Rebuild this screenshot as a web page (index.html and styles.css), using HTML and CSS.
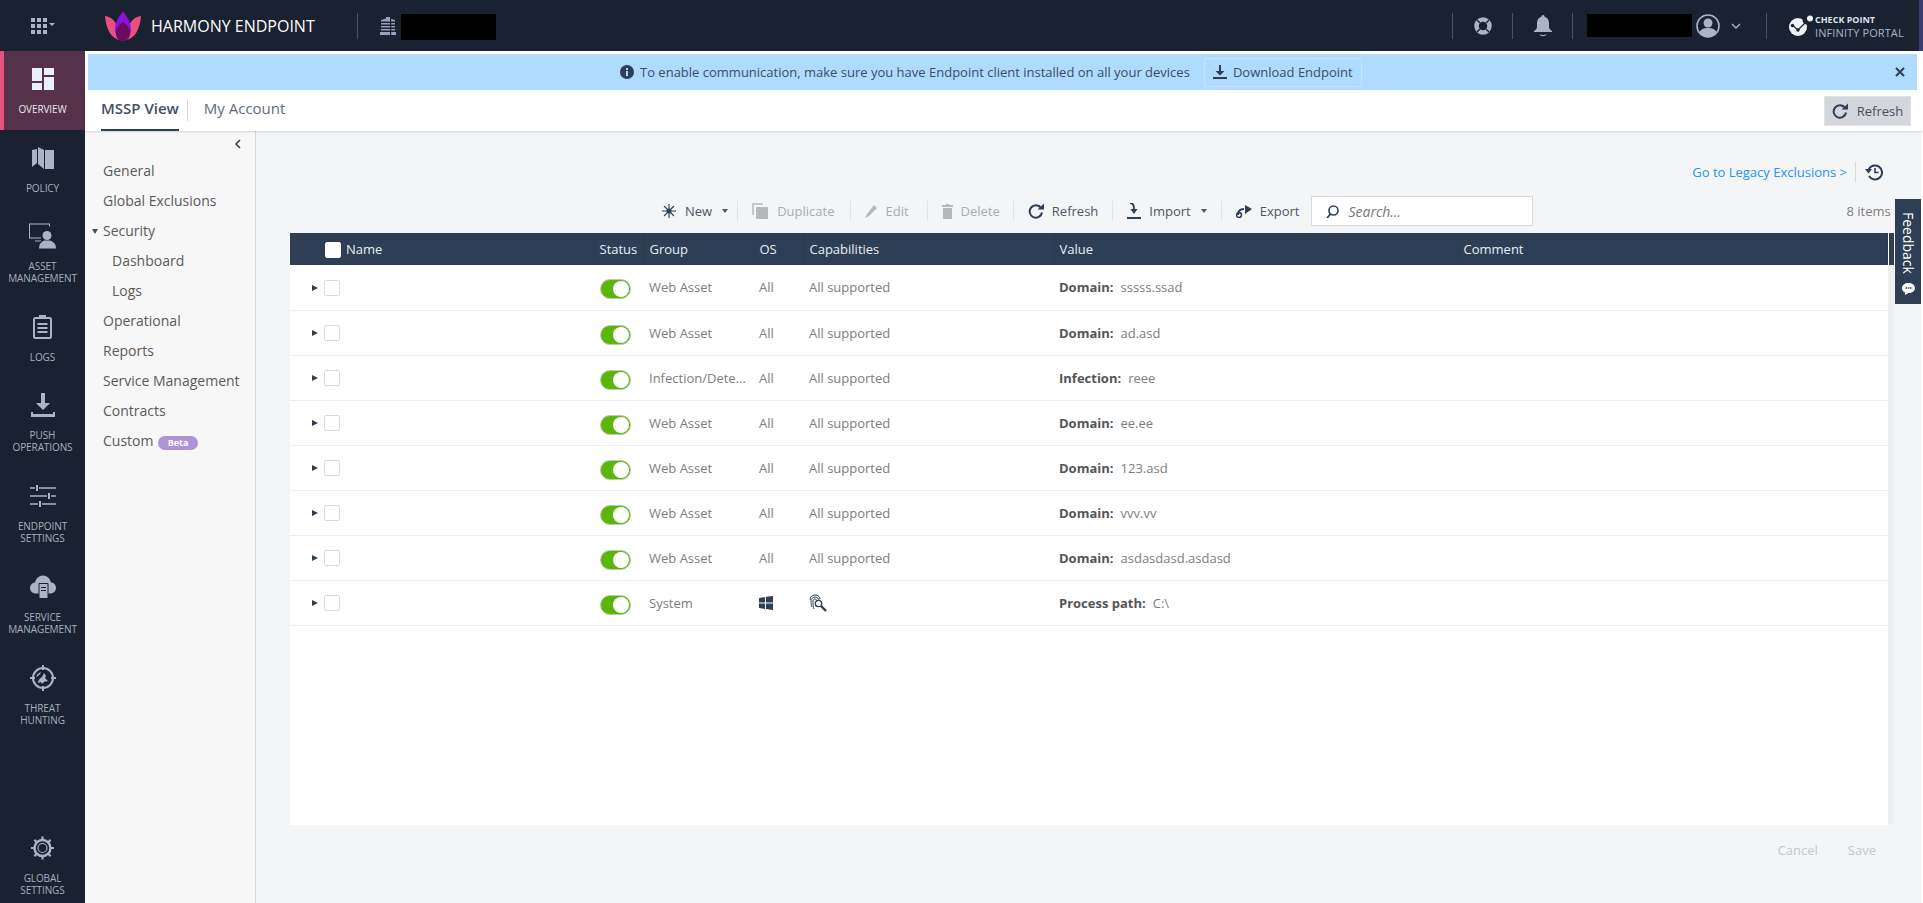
FILE: index.html
```html
<!DOCTYPE html>
<html lang="en">
<head>
  <meta charset="UTF-8">
  <title>Harmony Endpoint</title>
  <link rel="stylesheet" href="styles.css">
</head>
<body>

  <!-- Top bar -->
  <header class="topbar">
    <div class="apps">
      <svg width="24" height="16" viewBox="0 0 24 16" fill="#a9b4c6"><path d="M0 0h4v4H0zM6 0h4v4H6zM12 0h4v4h-4zM0 6h4v4H0zM6 6h4v4H6zM12 6h4v4h-4zM0 12h4v4H0zM6 12h4v4H6zM12 12h4v4h-4zM18 5h6l-3 3z"/></svg>
    </div>
    <svg class="logo" width="36" height="30" viewBox="0 0 36 30">
      <path d="M0 5C7 6 12 11 13 20c.4 3 1 6 2 9C7 28 1 19 0 5z" fill="#e8517f"/>
      <path d="M36 5c-7 1-12 6-13 15-.4 3-1 6-2 9 8-1 14-10 15-24z" fill="#e8517f"/>
      <path d="M18 0c3 5 8 10 8 18 0 7-4 12-8 12s-8-5-8-12c0-8 5-13 8-18z" fill="#8a10e0"/>
      <path d="M18 11c4 2 7 7 7 11 0 5-3 8-7 8s-7-3-7-8c0-4 3-9 7-11z" fill="#6c0a5c"/>
    </svg>
    <div class="product">HARMONY ENDPOINT</div>
    <div class="bar-sep sep-tenant"></div>
    <svg class="building" width="16" height="18" viewBox="0 0 16 18" fill="#93a2b8"><path d="M6 0h4v1.500l5 1.500v1.500H1V3l5-1.500zM1 6h14v1.500H1zM1 9h14v1.500H1zM1 12h14v1.500H1zM0 15h16v3H0z"/><path d="M10 1h1.200v17H10z" fill="#1a2130"/></svg>
    <div class="redact redact-tenant"></div>

    <div class="bar-right">
      <div class="bar-sep"></div>
      <div class="bar-icon">
        <svg width="18" height="18" viewBox="0 0 18 18"><circle cx="9" cy="9" r="6.500" fill="none" stroke="#a9b4c6" stroke-width="4.500"/><path d="M3 3l3 3M15 3l-3 3M3 15l3-3M15 15l-3-3" stroke="#1a2130" stroke-width="1.400"/></svg>
      </div>
      <div class="bar-sep"></div>
      <div class="bar-icon">
        <svg width="18" height="22" viewBox="0 0 18 22" fill="#a9b4c6"><path d="M9 0c1 0 1.600.8 1.600 1.700C13.500 2.500 15 5 15 8v4c0 1.500 1 2.500 3 4v1H0v-1c2-1.500 3-2.500 3-4V8c0-3 1.500-5.500 4.400-6.300C7.400.8 8 0 9 0z"/><path d="M6 19.500c1 1.500 5 1.500 6 0" fill="none" stroke="#a9b4c6" stroke-width="1.200"/></svg>
      </div>
      <div class="bar-sep"></div>
      <div class="redact redact-user"></div>
      <svg class="avatar" width="24" height="24" viewBox="0 0 24 24"><circle cx="12" cy="12" r="11" fill="#1a2130" stroke="#a9b4c6" stroke-width="1.600"/><circle cx="12" cy="9" r="4.500" fill="#a9b4c6"/><path d="M3.500 18c2-3.500 5-4 8.500-4s6.500.5 8.500 4c-2 3-5 5-8.500 5s-6.500-2-8.500-5z" fill="#a9b4c6"/></svg>
      <svg class="user-chev" width="10" height="6" viewBox="0 0 10 6"><path d="M1 1l4 4 4-4" fill="none" stroke="#a9b4c6" stroke-width="1.400"/></svg>
      <div class="bar-sep"></div>
      <div class="portal">
        <svg width="26" height="22" viewBox="0 0 26 22"><circle cx="10" cy="12" r="9" fill="#eef1f5"/><circle cx="19" cy="5" r="4.500" fill="#1a2130"/><circle cx="22" cy="3.500" r="3" fill="#eef1f5"/><path d="M4 10l6 5 8-8" fill="none" stroke="#1a2130" stroke-width="1.200"/><circle cx="4.500" cy="10.500" r="1.700" fill="#1a2130"/><circle cx="10" cy="15" r="1.700" fill="#1a2130"/></svg>
        <div class="portal-text">
          <div class="portal-top">CHECK POINT</div>
          <div class="portal-bottom">INFINITY PORTAL</div>
        </div>
      </div>
    </div>
  </header>

  <div class="layout">

    <!-- Left navigation -->
    <nav class="sidebar">
      <div class="nav-item active">
        <svg width="22" height="22" viewBox="0 0 22 22" fill="#e8f0fb"><path d="M0 0h10v13H0zM12 0h10v7H12zM0 15h10v7H0zM12 9h10v13H12z"/></svg>
        <span>OVERVIEW</span>
      </div>
      <div class="nav-item">
        <svg width="22" height="22" viewBox="0 0 22 22" fill="#a9b4c6"><path d="M0 3l5-1v14l-5 4zM6 0l6 3v19l-6-5zM13 3h9v19h-9z"/></svg>
        <span>POLICY</span>
      </div>
      <div class="nav-item">
        <svg width="27" height="25" viewBox="0 0 27 25" fill="#a9b4c6"><path d="M0 0h21v3h-1V1H1v13h11v1H0zM6 17h6v1H6z"/><circle cx="18" cy="12" r="4.500"/><path d="M10 25c0-5 3-7 5-8h6c3 1 6 3 6 8z"/></svg>
        <span>ASSET<br>MANAGEMENT</span>
      </div>
      <div class="nav-item">
        <svg width="19" height="24" viewBox="0 0 19 24"><rect x="1" y="3" width="17" height="20" rx="1.500" fill="none" stroke="#a9b4c6" stroke-width="2"/><path d="M6 0h7v4H6z" fill="#a9b4c6"/><path d="M4.500 9h10M4.500 13h10M4.500 17h10" stroke="#a9b4c6" stroke-width="1.800"/></svg>
        <span>LOGS</span>
      </div>
      <div class="nav-item">
        <svg width="24" height="24" viewBox="0 0 24 24" fill="#a9b4c6"><path d="M10 0h4v10h5l-7 7-7-7h5zM0 19h2v2h20v-2h2v5H0z"/></svg>
        <span>PUSH<br>OPERATIONS</span>
      </div>
      <div class="nav-item">
        <svg width="26" height="24" viewBox="0 0 26 24" fill="#a9b4c6"><path d="M0 3.200h5v1.600H0zM9 3.200h17v1.600H9zM6 1h2v6H6zM0 11.200h17v1.600H0zM21 11.200h5v1.600h-5zM18 9h2v6h-2zM0 19.200h8v1.600H0zM12 19.200h14v1.600H12zM9 17h2v6H9z"/></svg>
        <span>ENDPOINT<br>SETTINGS</span>
      </div>
      <div class="nav-item">
        <svg width="26" height="23" viewBox="0 0 26 23"><path d="M6 18c-3.500 0-6-2.500-6-5.500S2.500 7 5 7c1-4 4-7 8-7s7 3 8 7c3 0 5 2.500 5 5.500S23.500 18 20 18z" fill="#a9b4c6"/><path d="M9 8h9v15H9z" fill="#a9b4c6" stroke="#1a2130"/><path d="M11 12h5M11 15h5" stroke="#1a2130"/></svg>
        <span>SERVICE<br>MANAGEMENT</span>
      </div>
      <div class="nav-item">
        <svg width="26" height="26" viewBox="0 0 26 26"><circle cx="13" cy="13" r="10" fill="none" stroke="#a9b4c6" stroke-width="2"/><path d="M13 0v5M13 21v5M0 13h5M21 13h5" stroke="#a9b4c6" stroke-width="2"/><path d="M8 18c0-3 2-5 4-6l2-4 2 3-1 2 3 3-4 1-2 2-1-2z" fill="#a9b4c6"/><path d="M6 12c1-3 3-4 5-5-1 3-3 4-5 5z" fill="#a9b4c6"/></svg>
        <span>THREAT<br>HUNTING</span>
      </div>
      <div class="nav-item nav-bottom">
        <svg width="23" height="23" viewBox="0 0 23 23"><circle cx="11.500" cy="11.500" r="8" fill="none" stroke="#a9b4c6" stroke-width="2.500"/><circle cx="11.500" cy="11.500" r="4.500" fill="none" stroke="#a9b4c6" stroke-width="1.200"/><path d="M11.500 0v4M11.500 19v4M0 11.500h4M19 11.500h4M3.400 3.400l2.800 2.800M16.800 16.800l2.800 2.800M3.400 19.600l2.800-2.800M16.800 6.200l2.800-2.800" stroke="#a9b4c6" stroke-width="2.200"/></svg>
        <span>GLOBAL<br>SETTINGS</span>
      </div>
    </nav>

    <div class="page">

      <!-- Info banner -->
      <div class="banner">
        <svg class="info" width="14" height="14" viewBox="0 0 14 14"><circle cx="7" cy="7" r="7" fill="#2d3e55"/><path d="M6 6h2v5H6zM6 3h2v2H6z" fill="#aedbff"/></svg>
        <span class="banner-text">To enable communication, make sure you have Endpoint client installed on all your devices</span>
        <div class="banner-btn">
          <svg width="14" height="14" viewBox="0 0 14 14" fill="#2d3e55"><path d="M6 0h2v6h3.500L7 10.500 2.500 6H6zM0 12h14v2H0z"/></svg>
          Download Endpoint
        </div>
        <svg class="banner-close" width="10" height="10" viewBox="0 0 10 10"><path d="M1 1l8 8M9 1L1 9" stroke="#2d3e55" stroke-width="2"/></svg>
      </div>

      <!-- Tabs -->
      <div class="tabs">
        <div class="tab current">MSSP View</div>
        <div class="tab-sep"></div>
        <div class="tab">My Account</div>
        <div class="top-refresh">
          <svg width="16" height="16" viewBox="0 0 16 16"><path d="M13 5a6.200 6.200 0 1 0 1 4.500" fill="none" stroke="#2d3e55" stroke-width="2"/><path d="M9.500 6.500H16V.5z" fill="#2d3e55"/></svg>
          Refresh
        </div>
      </div>

      <div class="work">

        <!-- Sub navigation -->
        <aside class="subnav">
          <svg class="collapse" width="7" height="10" viewBox="0 0 7 10"><path d="M6 1L2 5l4 4" fill="none" stroke="#2d3e55" stroke-width="1.600"/></svg>
          <a>General</a>
          <a>Global Exclusions</a>
          <a class="open">Security</a>
          <a class="child">Dashboard</a>
          <a class="child">Logs</a>
          <a>Operational</a>
          <a>Reports</a>
          <a>Service Management</a>
          <a>Contracts</a>
          <a>Custom <span class="beta">Beta</span></a>
        </aside>

        <main class="content">
          <div class="legacy">
            <a>Go to Legacy Exclusions &gt;</a>
            <svg width="18" height="18" viewBox="0 0 18 18"><path d="M3.500 7a7 7 0 1 1 .5 6" fill="none" stroke="#2d3e55" stroke-width="2"/><path d="M0 6h7L3.500 10.500z" fill="#2d3e55"/><path d="M10 5v4.500h3.500" fill="none" stroke="#2d3e55" stroke-width="1.600"/></svg>
          </div>

          <div class="toolbar">
            <div class="tool tool-new">
              <svg width="16" height="16" viewBox="0 0 16 16"><path d="M8 1v14M1 8h14M3 3l10 10M13 3L3 13" stroke="#2d3e55" stroke-width="1.100"/><circle cx="8" cy="8" r="2.500" fill="#2d3e55"/></svg>
              New <i class="caret"></i>
            </div>
            <div class="tool off tool-dup">
              <svg width="17" height="17" viewBox="0 0 17 17"><path d="M1 12V1h10" fill="none" stroke="#b5b8bd" stroke-width="1.500"/><path d="M4 4h12v12H4z" fill="#b5b8bd"/></svg>
              Duplicate
            </div>
            <div class="tool off tool-edit">
              <svg width="12" height="13" viewBox="0 0 12 13" fill="#b5b8bd"><path d="M9 0l3 3-8 8-4 2 2-4z"/></svg>
              Edit
            </div>
            <div class="tool off tool-del">
              <svg width="11" height="15" viewBox="0 0 11 15" fill="#b5b8bd"><path d="M4 0h3v1h4v2H0V1h4zM1 4h9v11H1z"/></svg>
              Delete
            </div>
            <div class="tool">
              <svg width="16" height="16" viewBox="0 0 16 16"><path d="M13 5a6.200 6.200 0 1 0 1 4.500" fill="none" stroke="#2d3e55" stroke-width="2"/><path d="M9.500 6.500H16V.5z" fill="#2d3e55"/></svg>
              Refresh
            </div>
            <div class="tool">
              <svg width="14" height="16" viewBox="0 0 14 16"><path d="M3 0c3 0 4 2 4 6" fill="none" stroke="#2d3e55" stroke-width="1.800"/><path d="M3.500 6h7L7 11zM0 14h14v2H0z" fill="#2d3e55"/></svg>
              Import <i class="caret"></i>
            </div>
            <div class="tool last">
              <svg width="16" height="13" viewBox="0 0 16 13"><path d="M8 4C4 4 2 6 2 10" fill="none" stroke="#2d3e55" stroke-width="2"/><path d="M9 0l7 4-7 5z" fill="#2d3e55"/><circle cx="3" cy="10" r="2.500" fill="none" stroke="#2d3e55" stroke-width="1.500"/></svg>
              Export
            </div>
            <div class="search">
              <svg width="13" height="13" viewBox="0 0 13 13"><circle cx="7.500" cy="5.500" r="4.500" fill="none" stroke="#2d3e55" stroke-width="1.600"/><path d="M4.500 9L1 13" stroke="#2d3e55" stroke-width="1.800"/></svg>
              <em>Search...</em>
            </div>
            <div class="count">8 items</div>
          </div>

          <div class="table-wrap">
            <div class="table-box">
              <table class="grid">
                <colgroup>
                  <col class="c-name"><col class="c-status"><col class="c-group"><col class="c-os"><col class="c-cap"><col class="c-value"><col>
                </colgroup>
                <thead>
                  <tr>
                    <th><span class="check head-check"></span>Name</th>
                    <th>Status</th><th>Group</th><th>OS</th><th>Capabilities</th><th>Value</th><th>Comment</th>
                  </tr>
                </thead>
                <tbody>
                  <tr><td><i class="arrow"></i><span class="check"></span></td><td><span class="toggle"></span></td><td>Web Asset</td><td>All</td><td>All supported</td><td><b>Domain:</b>sssss.ssad</td><td></td></tr>
                  <tr><td><i class="arrow"></i><span class="check"></span></td><td><span class="toggle"></span></td><td>Web Asset</td><td>All</td><td>All supported</td><td><b>Domain:</b>ad.asd</td><td></td></tr>
                  <tr><td><i class="arrow"></i><span class="check"></span></td><td><span class="toggle"></span></td><td>Infection/Dete...</td><td>All</td><td>All supported</td><td><b>Infection:</b>reee</td><td></td></tr>
                  <tr><td><i class="arrow"></i><span class="check"></span></td><td><span class="toggle"></span></td><td>Web Asset</td><td>All</td><td>All supported</td><td><b>Domain:</b>ee.ee</td><td></td></tr>
                  <tr><td><i class="arrow"></i><span class="check"></span></td><td><span class="toggle"></span></td><td>Web Asset</td><td>All</td><td>All supported</td><td><b>Domain:</b>123.asd</td><td></td></tr>
                  <tr><td><i class="arrow"></i><span class="check"></span></td><td><span class="toggle"></span></td><td>Web Asset</td><td>All</td><td>All supported</td><td><b>Domain:</b>vvv.vv</td><td></td></tr>
                  <tr><td><i class="arrow"></i><span class="check"></span></td><td><span class="toggle"></span></td><td>Web Asset</td><td>All</td><td>All supported</td><td><b>Domain:</b>asdasdasd.asdasd</td><td></td></tr>
                  <tr>
                    <td><i class="arrow"></i><span class="check"></span></td><td><span class="toggle"></span></td><td>System</td>
                    <td><svg width="14" height="14" viewBox="0 0 14 14" fill="#2d3e55"><path d="M0 2l6-1v5.500H0zM7 .8L14 0v6.500H7zM0 7.500h6V13l-6-1zM7 7.500h7V14l-7-1z"/></svg></td>
                    <td><svg width="18" height="18" viewBox="0 0 18 18" fill="none" stroke="#2d3e55"><path d="M1 6c0-3 2-5 5-5s5 2 5 4M3 13c-1-2-1-4-1-6s2-4 4-4 4 2 4 3M5 15c-1-2-1-5-1-8 0-1 1-2 2-2s2 1 2 2"/><circle cx="9.500" cy="9.500" r="3.200" stroke-width="1.300"/><path d="M12 12l5 5" stroke-width="2.400"/></svg></td>
                    <td><b>Process path:</b>C:\</td><td></td>
                  </tr>
                </tbody>
              </table>
            </div>
            <div class="scroll-strip"></div>
          </div>

          <div class="actions">
            <span>Cancel</span>
            <span>Save</span>
          </div>

          <!-- Feedback tab -->
          <div class="feedback">
            <span>Feedback</span>
            <svg width="13" height="12" viewBox="0 0 13 12"><path d="M6.500 0C10 0 13 2 13 5s-3 5-6.500 5L3 12v-2.500C1 8.500 0 7 0 5c0-3 3-5 6.500-5z" fill="#fff"/><path d="M3.500 4.200h1.500v1.500H3.500zM5.800 4.200h1.500v1.500H5.800zM8 4.200h1.500v1.500H8z" fill="#2d3e55"/></svg>
          </div>
        </main>
      </div>
    </div>
  </div>

</body>
</html>
```

FILE: styles.css
```css
* {
  box-sizing: border-box;
}

body {
  margin: 0;
  height: 100vh;
  overflow: hidden;
  display: flex;
  flex-direction: column;
  background-color: #ffffff;
  color: #5a5a5a;
  font-family: "Open Sans", sans-serif;
  font-size: 13px;
}

/* Top bar */
.topbar {
  height: 51px;
  flex: none;
  display: flex;
  align-items: center;
  background-color: #1a2130;
  border-right: 4px solid #3a3f70;
}

.apps {
  width: 105px;
  padding: 0 0 0 31px;
  display: flex;
  align-items: center;
}

.logo {
  margin-right: 10px;
}

.product {
  width: 206px;
  color: #ffffff;
  font-size: 16px;
  white-space: nowrap;
}

.bar-sep {
  width: 1px;
  height: 26px;
  background-color: #47505f;
}

.building {
  margin: 0 5px 0 22px;
}

.redact {
  background-color: #000000;
}

.redact-tenant {
  width: 95px;
  height: 26px;
  margin-top: 2px;
}

.bar-right {
  margin-left: auto;
  display: flex;
  align-items: center;
}

.bar-icon {
  width: 59px;
  display: flex;
  justify-content: center;
}

.redact-user {
  width: 105px;
  height: 23px;
  margin: -1px 4px 0 14px;
}

.avatar {
  margin-right: 11px;
}

.user-chev {
  margin-right: 25px;
}

.portal {
  width: 152px;
  padding-left: 21px;
  display: flex;
  align-items: center;
  gap: 1px;
}

.portal-text {
  white-space: nowrap;
  line-height: 13px;
}

.portal-top {
  color: #dfe3ea;
  font-size: 9px;
  font-weight: 700;
}

.portal-bottom {
  color: #a9b4c6;
  font-size: 11px;
  letter-spacing: 0.1px;
}

/* Page frame */
.layout {
  flex: 1;
  min-height: 0;
  display: flex;
}

.sidebar {
  width: 85px;
  flex: none;
  display: flex;
  flex-direction: column;
  background-color: #1a2130;
}

.nav-item {
  height: 78px;
  padding-top: 15px;
  display: flex;
  flex-direction: column;
  align-items: center;
  color: #a7afbb;
  font-size: 10px;
  line-height: 12px;
  letter-spacing: -0.1px;
  text-align: center;
}

.nav-item svg {
  height: 26px;
  flex: none;
  margin-bottom: 11px;
}

.nav-item:has(br) {
  height: 91px;
}

.nav-item.active {
  height: 79px;
  background-color: #553249;
  border-left: 4px solid #e8517f;
  padding-right: 4px;
  color: #e6e8ee;
}

.nav-bottom {
  margin-top: auto;
  height: 65px !important;
  padding-top: 0;
  margin-bottom: 3px;
}

.page {
  flex: 1;
  min-width: 0;
  display: flex;
  flex-direction: column;
}

/* Banner */
.banner {
  height: 36px;
  flex: none;
  margin: 3px 6px 0 3px;
  padding-left: 532px;
  display: flex;
  align-items: center;
  background-color: #aedbff;
  color: #3d4d63;
}

.banner-text {
  margin-left: 6px;
}

.banner-btn {
  height: 29px;
  width: 158px;
  margin-left: 14px;
  display: flex;
  align-items: center;
  justify-content: center;
  gap: 6px;
  border: 1px solid #c7e3f9;
}

.banner-close {
  margin-left: auto;
  margin-right: 12px;
}

/* Tabs */
.tabs {
  height: 41px;
  flex: none;
  padding: 0 12px 0 16px;
  display: flex;
  align-items: center;
  position: relative;
  z-index: 1;
  background-color: #ffffff;
  box-shadow: 0 1px 2px rgba(0, 0, 0, 0.15);
  font-size: 15px;
}

.tab {
  height: 41px;
  line-height: 37px;
  color: #5e6b80;
}

.tab.current {
  color: #3f4f66;
  font-weight: 600;
  border-bottom: 2px solid #2d3e55;
}

.tab-sep {
  width: 1px;
  height: 21px;
  margin: 0 16px 0 8px;
  background-color: #d8d8d8;
}

.top-refresh {
  margin-left: auto;
  width: 87px;
  height: 30px;
  display: flex;
  align-items: center;
  justify-content: center;
  gap: 9px;
  background-color: #d3d6db;
  border: 1px solid #e0e2e5;
  color: #4b4f57;
  font-size: 13px;
}

.work {
  flex: 1;
  min-height: 0;
  display: flex;
}

/* Sub navigation */
.subnav {
  width: 171px;
  flex: none;
  position: relative;
  padding-top: 25px;
  display: flex;
  flex-direction: column;
  background-color: #f7f7f7;
  border-right: 1px solid #d6d6d6;
  font-size: 14px;
}

.subnav a {
  height: 30px;
  line-height: 30px;
  padding-left: 18px;
  white-space: nowrap;
  color: #5a5a5a;
}

.subnav a.child {
  padding-left: 27px;
}

.subnav a.open {
  position: relative;
}

.subnav a.open::before {
  content: "";
  position: absolute;
  left: 7px;
  top: 13px;
  border-style: solid;
  border-width: 5px 3px 0;
  border-color: #3f4f66 transparent transparent;
}

.collapse {
  position: absolute;
  top: 8px;
  right: 14px;
}

.beta {
  display: inline-block;
  width: 40px;
  height: 14px;
  margin-left: 1px;
  border-radius: 7px;
  background-color: #ae94d6;
  color: #ffffff;
  font-size: 9px;
  font-weight: 700;
  line-height: 14px;
  text-align: center;
  vertical-align: 0;
}

/* Main area */
.content {
  flex: 1;
  min-width: 0;
  position: relative;
  padding: 31px 0 0 34px;
  display: flex;
  flex-direction: column;
  background-color: #f4f5f7;
  border-right: 2px solid #ffffff;
}

.legacy {
  height: 20px;
  padding-right: 38px;
  display: flex;
  align-items: center;
  justify-content: flex-end;
}

.legacy a {
  color: #2196f3;
  padding-right: 8px;
  border-right: 1px solid #d8d8d8;
  line-height: 20px;
  margin-right: 9px;
}

.toolbar {
  height: 30px;
  margin-top: 14px;
  padding-left: 357px;
  display: flex;
  align-items: center;
  color: #4f5661;
}

.tool {
  height: 20px;
  padding: 0 14px;
  display: flex;
  align-items: center;
  gap: 8px;
  white-space: nowrap;
  border-right: 1px solid #e1e3e6;
}

.tool.off {
  color: #a9acb1;
}

.tool.last {
  border-right: none;
  padding-right: 12px;
}

/* the real toolbar buttons are not evenly spaced */
.tool-new { padding-right: 9px; }
.tool-dup { padding-right: 16px; }
.tool-edit { padding-right: 18px; }
.tool-del { padding-right: 13px; }

.caret {
  margin-left: 2px;
  border-style: solid;
  border-width: 4px 3px 0;
  border-color: #4f5661 transparent transparent;
}

.search {
  width: 222px;
  height: 30px;
  padding-left: 14px;
  display: flex;
  align-items: center;
  gap: 9px;
  background-color: #ffffff;
  border: 1px solid #d6d8dc;
  color: #777777;
  font-size: 14px;
}

.count {
  margin-left: 313px;
  color: #7d7d7d;
  white-space: nowrap;
}

/* Table */
.table-wrap {
  height: 592px;
  margin-top: 7px;
  margin-right: 27px;
  display: flex;
}

.table-box {
  flex: 1;
  min-width: 0;
  background-color: #ffffff;
}

.scroll-strip {
  width: 6px;
  background-color: #eef0f2;
  border-radius: 0 0 3px 3px;
}

.scroll-strip::before {
  content: "";
  display: block;
  height: 32px;
  background-color: #2d3e55;
  border-left: 1px solid #ffffff;
}

.grid {
  width: 100%;
  table-layout: fixed;
  border-collapse: collapse;
}

.c-name { width: 304px; }
.c-status { width: 50px; }
.c-group { width: 110px; }
.c-os { width: 50px; }
.c-cap { width: 250px; }
.c-value { width: 404px; }

.grid th {
  height: 32px;
  padding: 0 5px;
  background-color: #2d3e55;
  border-right: 1px solid #2a3a4f;
  color: #e9eef5;
  font-weight: 400;
  text-align: left;
  white-space: nowrap;
}

.grid th:first-child {
  padding-left: 35px;
}

.grid td {
  height: 45px;
  padding: 0 5px;
  border-bottom: 1px solid #eeeeee;
  color: #7d7d7d;
  vertical-align: middle;
  white-space: nowrap;
}

.grid td:first-child {
  padding-left: 22px;
  padding-bottom: 1px;
}

.grid td svg {
  display: block;
}

.grid b {
  margin-right: 7px;
  color: #555555;
  font-weight: 700;
}

.arrow {
  display: inline-block;
  margin-right: 6px;
  border-style: solid;
  border-width: 3.5px 0 3.5px 6px;
  border-color: transparent transparent transparent #2d3e55;
  vertical-align: middle;
}

.check {
  display: inline-block;
  width: 16px;
  height: 16px;
  background-color: #ffffff;
  border: 1px solid #d9d9d9;
  border-radius: 2px;
  vertical-align: middle;
}

.head-check {
  margin-right: 5px;
  border-color: #ffffff;
}

.toggle {
  display: block;
  position: relative;
  width: 31px;
  height: 20px;
  margin: 4px 0 0 1px;
  background-color: #5cb60a;
  border: 1px solid #bccab0;
  border-radius: 10px;
}

.toggle::after {
  content: "";
  position: absolute;
  top: 1px;
  right: 1px;
  width: 16px;
  height: 16px;
  background-color: #ffffff;
  border-radius: 50%;
}

.actions {
  height: 50px;
  padding-right: 45px;
  display: flex;
  align-items: center;
  justify-content: flex-end;
  gap: 30px;
  color: #c5c7cb;
}

.feedback {
  position: absolute;
  top: 68px;
  right: 0;
  width: 26px;
  height: 105px;
  padding-top: 13px;
  display: flex;
  flex-direction: column;
  align-items: center;
  gap: 9px;
  background-color: #2d3e55;
  color: #ffffff;
  font-size: 14px;
}

.feedback span {
  writing-mode: vertical-rl;
  line-height: 26px;
}
```
